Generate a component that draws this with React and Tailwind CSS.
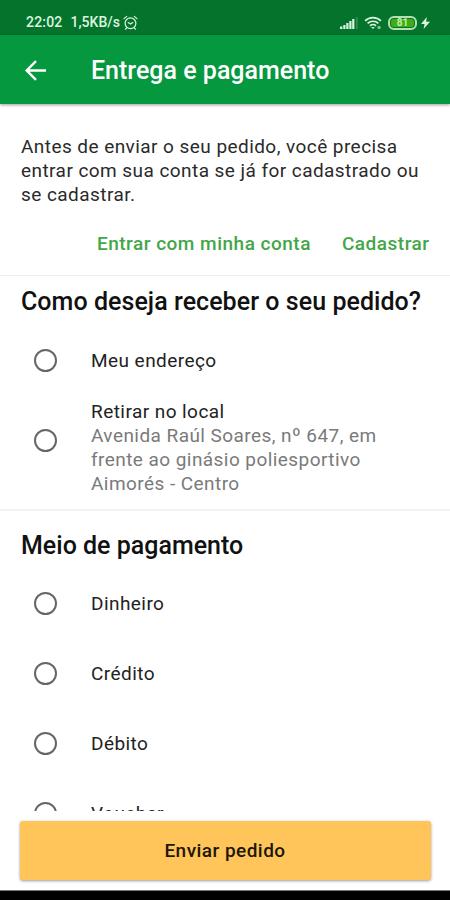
import React, { useState } from "react";

const deliveryOptions = [
  { id: "address", label: "Meu endereço" },
  {
    id: "pickup",
    label: "Retirar no local",
    lines: [
      "Avenida Raúl Soares, nº 647, em",
      "frente ao ginásio poliesportivo",
      "Aimorés - Centro",
    ],
  },
];

const paymentOptions = [
  { id: "cash", label: "Dinheiro" },
  { id: "credit", label: "Crédito" },
  { id: "debit", label: "Débito" },
  { id: "voucher", label: "Voucher" },
];

const StatusBar = () => (
  <div className="flex h-[35px] shrink-0 items-center bg-[#04742c] pl-[26px] pr-5 pt-[10px] text-[14px] font-medium text-[#dcf5e0]">
    <span className="tracking-[0.2px]">22:02</span>
    <span className="ml-[8px]">1,5KB/s</span>
    <svg className="ml-[3px] h-[16px] w-[15px]" viewBox="0 0 15 16" fill="none" stroke="currentColor" strokeWidth="1.2" strokeLinecap="round">
      <circle cx="7.5" cy="8.3" r="5.4" />
      <path d="M1 3.6 3.7 1.4M14 3.6l-2.7-2.2M5.2 7.6 7.5 9l2.3-1.4M3.6 12.9l-1 1.3M11.4 12.9l1 1.3" />
    </svg>
    <svg className="ml-auto h-[12px] w-[18px]" viewBox="0 0 18 12" fill="currentColor">
      <path d="M0 9.5h2.4V12H0zM3.3 8h2.2v4H3.3zM6.3 6h2.2v6H6.3zM9.3 4h2.2v8H9.3zM12.2 2h2.2v10h-2.2z" />
      <path d="M16.4 0h1v12h-1z" opacity="0.35" />
    </svg>
    <svg className="ml-[6px] h-[14px] w-[18px]" viewBox="0 0 19 15" fill="none" stroke="currentColor" strokeWidth="1.8">
      <path d="M1 5.3c4.6-4.7 12.4-4.7 17 0M3.7 8c3.2-3.2 8.4-3.2 11.6 0M6.3 10.6c1.8-1.7 4.6-1.7 6.4 0" />
      <path d="m7.3 11.8 2.2 2.2 2-2z" fill="currentColor" stroke="none" />
      <circle cx="16" cy="12.3" r="1.8" fill="currentColor" stroke="none" opacity="0.6" />
    </svg>
    <div className="ml-[6px] flex h-[14px] w-[29px] items-center rounded-[6px] border-2 border-[#b5e0b6] p-[1px]">
      <div className="flex h-full w-full items-center justify-center rounded-[3px] bg-[#3fae14] text-[10px] leading-none font-bold text-[#c5eea8]">
        81
      </div>
    </div>
    <svg className="ml-[4px] h-[12px] w-[9px]" viewBox="0 0 9 12" fill="currentColor">
      <path d="M5.8 0 0 7h3.6L2.6 12 9 4.8H5.2z" />
    </svg>
  </div>
);

const Radio = () => (
  <span className="h-[23px] w-[23px] shrink-0 rounded-full border-2 border-[#666666]" />
);

const Option = ({ option, name, selected, onSelect }) => (
  <label
    className={`flex cursor-pointer items-center gap-[34px] pl-[34px] ${
      option.lines ? "h-[90px]" : "h-[70px]"
    }`}
  >
    <input
      type="radio"
      name={name}
      className="peer sr-only"
      checked={selected === option.id}
      onChange={() => onSelect(option.id)}
    />
    <Radio />
    <div
      className={`text-[19px] tracking-[0.44px] text-[#222222] ${
        option.lines ? "pt-[16px] leading-[23.8px]" : "pt-[1px] leading-[24px]"
      }`}
    >
      <p>{option.label}</p>
      {option.lines && (
        <div className="text-[#7a7a7a]">
          {option.lines.map((line) => (
            <p key={line}>{line}</p>
          ))}
        </div>
      )}
    </div>
  </label>
);

const App = () => {
  const [delivery, setDelivery] = useState(null);
  const [payment, setPayment] = useState(null);

  return (
    <div className="flex h-[900px] w-[450px] flex-col overflow-hidden bg-white font-[Roboto,sans-serif]">
      <StatusBar />
      <header className="z-10 flex h-[69px] shrink-0 items-center bg-[#05983f] pt-[2px] pl-[25px] text-white shadow-[0_1px_3px_rgba(0,0,0,0.4)]">
        <svg className="h-[21px] w-[21px]" viewBox="0 0 21 21" fill="none" stroke="currentColor" strokeWidth="2.4">
          <path d="M21 10.5H2M11 1.2 1.7 10.5l9.3 9.3" />
        </svg>
        <h1 className="ml-[45px] text-[25px] font-medium">Entrega e pagamento</h1>
      </header>

      <main className="h-[707px] shrink-0 overflow-hidden">
        <section className="h-[172px] border-b border-[#eeeeee] pt-[31px] pl-[21px]">
          <div className="text-[19px] leading-[24px] tracking-[0.44px] text-[#2a2a2a]">
            <p>Antes de enviar o seu pedido, você precisa</p>
            <p>entrar com sua conta se já for cadastrado ou</p>
            <p>se cadastrar.</p>
          </div>
          <div className="mt-[25px] flex justify-end gap-[31px] pr-[20.5px] text-[19px] leading-[24px] font-medium tracking-[0.5px] text-[#43a649]">
            <button type="button">Entrar com minha conta</button>
            <button type="button">Cadastrar</button>
          </div>
        </section>

        <section className="h-[235px] border-b-2 border-[#f3f3f3]">
          <h2 className="h-[49px] pt-[10px] pl-[21px] text-[25px] leading-[32px] font-medium tracking-[0.05px] text-[#111111]">
            Como deseja receber o seu pedido?
          </h2>
          {deliveryOptions.map((option) => (
            <Option key={option.id} option={option} name="delivery" selected={delivery} onSelect={setDelivery} />
          ))}
        </section>

        <section>
          <h2 className="h-[57px] pt-[19px] pl-[21px] text-[25px] leading-[32px] font-medium text-[#111111]">
            Meio de pagamento
          </h2>
          {paymentOptions.map((option) => (
            <Option key={option.id} option={option} name="payment" selected={payment} onSelect={setPayment} />
          ))}
        </section>
      </main>

      <footer className="h-[79px] shrink-0 pt-[10px] pr-[19px] pl-[20px]">
        <button
          type="button"
          className="h-[59px] w-full rounded-[3px] bg-[#ffc55b] pt-[1px] pr-[1px] text-[19px] font-medium tracking-[0.46px] text-[#1c1708] shadow-[0_1px_3px_rgba(0,0,0,0.4)]"
        >
          Enviar pedido
        </button>
      </footer>
      <div className="h-[10px] shrink-0 border-t border-[#777777] bg-black" />
    </div>
  );
};

export default App;
